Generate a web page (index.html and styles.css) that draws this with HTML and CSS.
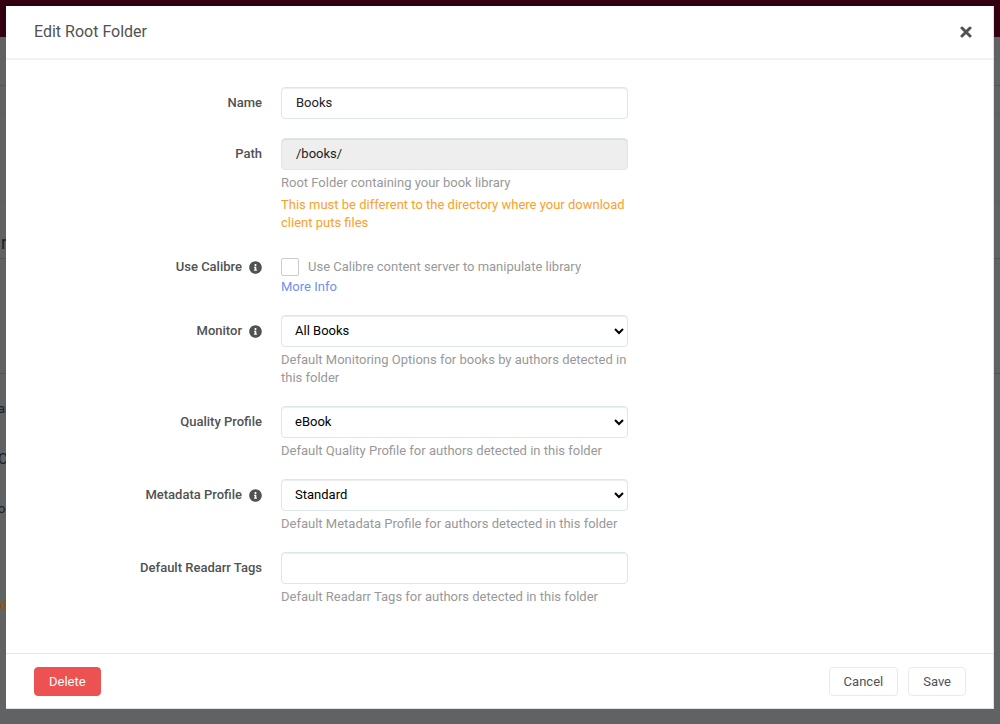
FILE: index.html
```html
<!DOCTYPE html>
<html lang="en">
<head>
  <meta charset="UTF-8"/>
  <meta name="viewport" content="width=device-width, initial-scale=1.0"/>
  <title>Edit Root Folder</title>
  <link rel="stylesheet" href="styles.css">
</head>
<body>

  <!-- Info icon, shared by the labels -->
  <svg class="sprite" aria-hidden="true">
    <symbol id="info" viewBox="0 0 512 512">
      <path fill="currentColor" d="M256 8C119 8 8 119 8 256s111 248 248 248 248-111 248-248S393 8 256 8zm0 110c23 0 42 19 42 42s-19 42-42 42-42-19-42-42 19-42 42-42zm56 254c0 7-5 12-12 12h-88c-7 0-12-5-12-12v-24c0-7 5-12 12-12h12v-64h-12c-7 0-12-5-12-12v-24c0-7 5-12 12-12h64c7 0 12 5 12 12v100h12c7 0 12 5 12 12v24z"/>
    </symbol>
  </svg>

  <!-- Page behind the modal -->
  <div class="page" aria-hidden="true">
    <div class="page-header"></div>
    <div class="page-toolbar"></div>
    <div class="page-tabs"></div>
    <div class="page-space"></div>
    <div class="page-title">r</div>
    <div class="page-table"></div>
    <div class="page-row">ar</div>
    <div class="page-row big">C</div>
    <div class="page-row">oo</div>
    <div class="page-row warn">d</div>
  </div>

  <div class="backdrop">
    <form class="modal" role="dialog" aria-labelledby="modal-title">
      <header class="modal-header">
        <h1 id="modal-title">Edit Root Folder</h1>
        <button class="close" type="button" aria-label="Close">
          <svg viewBox="0 0 12 12" width="12" height="12"><path d="M2 2l8 8M10 2l-8 8" stroke="currentColor" stroke-width="3" stroke-linecap="round"/></svg>
        </button>
      </header>

      <div class="modal-body">
        <div class="group">
          <label class="label" for="name">Name</label>
          <div class="field">
            <input class="input" id="name" type="text" value="Books">
          </div>
        </div>

        <div class="group">
          <label class="label" for="path">Path</label>
          <div class="field">
            <input class="input" id="path" type="text" value="/books/" readonly>
            <p class="help">Root Folder containing your book library</p>
            <p class="help warning">This must be different to the directory where your download client puts files</p>
          </div>
        </div>

        <div class="group">
          <label class="label" for="calibre">Use Calibre <svg class="info"><use href="#info"/></svg></label>
          <div class="field">
            <label class="check">
              <input id="calibre" type="checkbox">
              Use Calibre content server to manipulate library
            </label>
            <a class="link" href="#">More Info</a>
          </div>
        </div>

        <div class="group">
          <label class="label" for="monitor">Monitor <svg class="info"><use href="#info"/></svg></label>
          <div class="field">
            <select class="input" id="monitor"><option>All Books</option></select>
            <p class="help">Default Monitoring Options for books by authors detected in this folder</p>
          </div>
        </div>

        <div class="group">
          <label class="label" for="quality">Quality Profile</label>
          <div class="field">
            <select class="input" id="quality"><option>eBook</option></select>
            <p class="help">Default Quality Profile for authors detected in this folder</p>
          </div>
        </div>

        <div class="group">
          <label class="label" for="metadata">Metadata Profile <svg class="info"><use href="#info"/></svg></label>
          <div class="field">
            <select class="input" id="metadata"><option>Standard</option></select>
            <p class="help">Default Metadata Profile for authors detected in this folder</p>
          </div>
        </div>

        <div class="group">
          <label class="label" for="tags">Default Readarr Tags</label>
          <div class="field">
            <input class="input" id="tags" type="text">
            <p class="help">Default Readarr Tags for authors detected in this folder</p>
          </div>
        </div>
      </div>

      <footer class="modal-footer">
        <button class="btn danger" type="button">Delete</button>
        <button class="btn" type="button">Cancel</button>
        <button class="btn" type="submit">Save</button>
      </footer>
    </form>
  </div>

</body>
</html>
```
FILE: styles.css
```css
* {
  margin: 0; padding: 0;
  box-sizing: border-box;
}

body {
  font-family: Roboto, "Open Sans", sans-serif;
  font-size: 13px;
  line-height: 18px;
  color: #515253;
  background: #606264;
  overflow: hidden;
}

button, input, select {
  font: inherit;
}

.sprite {
  display: none;
}

/* page behind the modal */
.page {
  color: #1c1e20;
}

.page-header {
  height: 37px;
  background: #33000f;
}

.page-toolbar {
  height: 49px;
  border-bottom: 1px solid #55585a;
}

.page-tabs {
  height: 28px;
  border-bottom: 1px solid #5b5d5f;
}

.page-space {
  height: 88px;
  border-bottom: 1px solid #5b5d5f;
}

.page-title {
  height: 57px;
  padding: 32px 0 0 1px;
  font-size: 18px;
  border-bottom: 1px solid #505254;
}

.page-table {
  height: 115px;
  margin-bottom: 26px;
  border-bottom: 1px solid #505254;
}

.page-row {
  height: 50px;
  text-indent: -2px;
}

.page-row.big {
  font-size: 15px;
}

.page-row.warn {
  margin-top: 46px;
  text-indent: 0;
  color: #9a5210;
  font-weight: bold;
}

/* modal */
.backdrop {
  position: fixed;
  inset: 0;
  padding: 6px 6px 15px;
}

.modal {
  display: flex;
  flex-direction: column;
  height: 100%;
  background: #fff;
  border: 1px solid #e0e1e2;
  border-width: 0 1px 1px 0;
}

.modal-header {
  display: flex;
  align-items: center;
  justify-content: space-between;
  padding: 16px 21px 16px 28px;
  border-bottom: 2px solid #f1f1f1;
}

.modal-header h1 {
  font-size: 16px;
  font-weight: normal;
  line-height: 20px;
}

.close {
  display: flex;
  border: none;
  background: none;
  color: #515253;
  cursor: pointer;
}

.modal-body {
  flex: 1;
  overflow: auto;
  padding: 27px 28px;
}

.group {
  display: flex;
  gap: 19px;
  max-width: 594px;
  margin-bottom: 19px;
}

.label {
  display: flex;
  justify-content: flex-end;
  align-items: center;
  gap: 7px;
  flex: 0 0 228px;
  height: 32px;
  font-weight: 500;
}

.info {
  width: 13px;
  height: 13px;
}

.field {
  flex: 1;
}

.input {
  display: block;
  width: 100%;
  height: 32px;
  padding: 5px 14px 7px;
  border: 1px solid #dde6e9;
  border-radius: 4px;
  background: #fff;
  color: #222;
  box-shadow: inset 0 1px 1px rgba(0, 0, 0, 0.075);
}

select.input {
  padding: 0 0 2px 9px;
  color: #000;
}

.input:read-only:not(select) {
  background: #eee;
}

.help {
  margin-top: 4px;
  color: #999;
}

.help.warning {
  color: #fba02c;
}

.check {
  display: flex;
  align-items: center;
  gap: 9px;
  padding-top: 7px;
  color: #999;
}

.check input {
  appearance: none;
  width: 18px;
  height: 18px;
  border: 1px solid #ccc;
  border-radius: 2px;
  background: #fff;
}

.link {
  display: block;
  margin-top: 2px;
  color: #6b92ee;
  text-decoration: none;
}

.modal-footer {
  display: flex;
  gap: 10px;
  padding: 13px 27px 12px 28px;
  border-top: 1px solid #e5e5e5;
}

.btn {
  height: 29px;
  padding: 0 14px;
  border: 1px solid #eaeaea;
  border-radius: 4px;
  background: #fff;
  color: #515253;
  cursor: pointer;
}

.btn.danger {
  margin-right: auto;
  border-color: #ec5252;
  background: #ec5252;
  color: #fff;
}
```
